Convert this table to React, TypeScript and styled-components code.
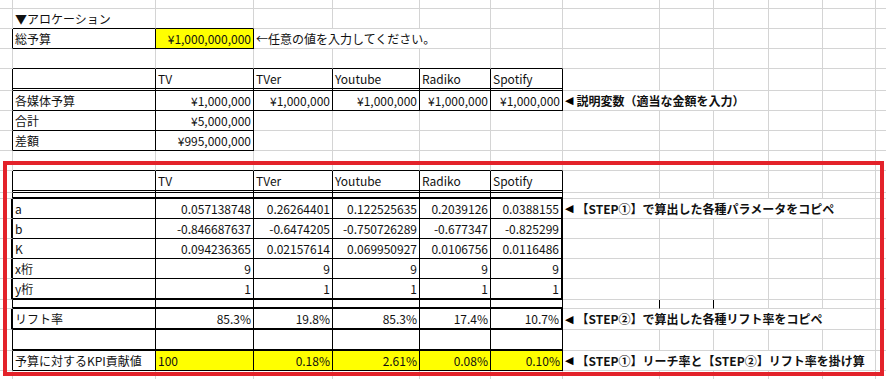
import React from "react";
import styled, { createGlobalStyle } from "styled-components";

type Edge = "n" | "g" | "k" | "K" | "d";

const COLS = [13, 143, 98, 79, 87, 71, 72, 97, 54, 55, 54, 53];
const NCOL = COLS.length + 1;
const ROWS = [9, 20, 20, 20, 22, 20, 20, 20, 20, 22, 6, 20, 20, 20, 20, 21, 9, 21, 21, 20, 9];
const NROW = ROWS.length;

const rank: Record<Edge, number> = { n: 0, g: 1, k: 2, K: 3, d: 4 };

const edgeCss = (e: Edge) =>
  e === "n"
    ? "0 none"
    : e === "g"
    ? "1px solid #d4d4d4"
    : e === "k"
    ? "1px solid #000"
    : e === "K"
    ? "2px solid #000"
    : "3px double #000";

// V[i][j]: right edge of column j in row i ; H[i][j]: bottom edge of row i in column j
const V: Edge[][] = Array.from({ length: NROW }, () =>
  Array.from({ length: NCOL }, (_, j) => (j === NCOL - 1 ? "n" : "g") as Edge)
);
const H: Edge[][] = Array.from({ length: NROW }, () =>
  Array.from({ length: NCOL }, () => "g" as Edge)
);

const setV = (i: number, j: number, e: Edge) => {
  if (i < 0 || j < 0 || i >= NROW || j >= NCOL) return;
  if (rank[e] > rank[V[i][j]]) V[i][j] = e;
};
const setH = (i: number, j: number, e: Edge) => {
  if (i < 0 || j < 0 || i >= NROW || j >= NCOL) return;
  if (rank[e] > rank[H[i][j]]) H[i][j] = e;
};

type BoxOpts = {
  top?: Edge;
  bottom?: Edge;
  left?: Edge;
  right?: Edge;
  iv?: Edge;
  ih?: Edge;
};

const box = (r0: number, r1: number, c0: number, c1: number, o: BoxOpts) => {
  for (let c = c0; c <= c1; c++) {
    if (o.top) setH(r0 - 1, c, o.top);
    if (o.bottom) setH(r1, c, o.bottom);
  }
  for (let r = r0; r <= r1; r++) {
    if (o.left) setV(r, c0 - 1, o.left);
    if (o.right) setV(r, c1, o.right);
    if (o.iv) for (let c = c0; c < c1; c++) setV(r, c, o.iv);
  }
  if (o.ih)
    for (let r = r0; r < r1; r++) for (let c = c0; c <= c1; c++) setH(r, c, o.ih);
};

const all = (e: Edge): BoxOpts => ({ top: e, bottom: e, left: e, right: e, iv: e, ih: e });

box(2, 2, 1, 2, all("k"));
box(4, 4, 1, 6, { ...all("k"), bottom: "d" });
box(5, 5, 1, 6, all("k"));
box(6, 7, 1, 2, all("k"));
box(9, 9, 1, 6, { ...all("k"), bottom: "d" });
box(10, 10, 1, 6, { left: "k", right: "k", iv: "k", bottom: "K" });
box(11, 15, 1, 6, { top: "K", bottom: "K", left: "K", right: "K", iv: "k", ih: "k" });
box(16, 16, 1, 6, { left: "k", right: "k", iv: "k", bottom: "K" });
setV(16, 7, "k");
setV(16, 8, "k");
box(17, 17, 1, 6, { top: "K", bottom: "K", left: "K", right: "K", iv: "k" });
box(18, 18, 1, 6, { left: "k", right: "k", iv: "k", bottom: "K" });
box(19, 19, 1, 6, { ...all("k"), top: "K" });

type Spec = {
  c: number;
  span?: number;
  text?: string;
  align?: "left" | "right";
  bold?: boolean;
  fill?: string;
  note?: boolean;
};

const YELLOW = "#ffff00";
const heads = ["TV", "TVer", "Youtube", "Radiko", "Spotify"];
const headRow: Spec[] = heads.map((t, k) => ({ c: 2 + k, text: t }));
const numRow = (label: string, vals: string[], fill?: string): Spec[] => [
  { c: 1, text: label },
  ...vals.map((v, k) => ({ c: 2 + k, text: v, align: "right" as const, fill })),
];

const DATA: Record<number, Spec[]> = {
  1: [{ c: 1, text: "▼アロケーション" }],
  2: [
    { c: 1, text: "総予算" },
    { c: 2, text: "¥1,000,000,000", align: "right", fill: YELLOW },
    { c: 3, span: 3, text: "←任意の値を入力してください。" },
  ],
  4: headRow,
  5: [
    ...numRow("各媒体予算", ["¥1,000,000", "¥1,000,000", "¥1,000,000", "¥1,000,000", "¥1,000,000"]),
    { c: 7, span: 3, text: "説明変数（適当な金額を入力）", bold: true, note: true },
  ],
  6: numRow("合計", ["¥5,000,000"]),
  7: numRow("差額", ["¥995,000,000"]),
  9: headRow,
  11: [
    ...numRow("a", ["0.057138748", "0.26264401", "0.122525635", "0.2039126", "0.0388155"]),
    { c: 7, span: 5, text: "【STEP①】で算出した各種パラメータをコピペ", bold: true, note: true },
  ],
  12: numRow("b", ["-0.846687637", "-0.6474205", "-0.750726289", "-0.677347", "-0.825299"]),
  13: numRow("K", ["0.094236365", "0.02157614", "0.069950927", "0.0106756", "0.0116486"]),
  14: numRow("x桁", ["9", "9", "9", "9", "9"]),
  15: numRow("y桁", ["1", "1", "1", "1", "1"]),
  17: [
    ...numRow("リフト率", ["85.3%", "19.8%", "85.3%", "17.4%", "10.7%"]),
    { c: 7, span: 5, text: "【STEP②】で算出した各種リフト率をコピペ", bold: true, note: true },
  ],
  19: [
    { c: 1, text: "予算に対するKPI貢献値" },
    { c: 2, text: "100", fill: YELLOW },
    ...["0.18%", "2.61%", "0.08%", "0.10%"].map((v, k) => ({
      c: 3 + k,
      text: v,
      align: "right" as const,
      fill: YELLOW,
    })),
    {
      c: 7,
      span: 5,
      text: "【STEP①】リーチ率と【STEP②】リフト率を掛け算",
      bold: true,
      note: true,
    },
  ],
};

const GlobalStyle = createGlobalStyle`
  html, body { margin: 0; padding: 0; background: #ffffff; }
  body { font-family: "Noto Sans CJK JP", "Noto Sans", sans-serif; }
`;

const Wrap = styled.div`
  position: relative;
  width: 886px;
  height: 379px;
  overflow: hidden;
  background: #ffffff;
`;

const Sheet = styled.div`
  display: grid;
  grid-template-columns: ${COLS.map((w) => `${w}px`).join(" ")} 1fr;
  grid-template-rows: ${ROWS.map((h) => `${h}px`).join(" ")};
  width: 886px;
  font-family: "Noto Sans CJK JP", "Noto Sans", sans-serif;
  font-size: 12px;
  color: #111;
`;

type CellProps = {
  $r: Edge;
  $b: Edge;
  $span: number;
  $fill?: string;
  $align?: "left" | "right";
  $bold?: boolean;
};

const Cell = styled.div<CellProps>`
  box-sizing: border-box;
  grid-column: span ${(p) => p.$span};
  border-right: ${(p) => edgeCss(p.$r)};
  border-bottom: ${(p) => edgeCss(p.$b)};
  background: ${(p) => p.$fill ?? "transparent"};
  display: flex;
  align-items: center;
  justify-content: ${(p) => (p.$align === "right" ? "flex-end" : "flex-start")};
  padding: 0 2px 0 2px;
  white-space: nowrap;
  overflow: visible;
  min-width: 0;
  line-height: 1;
  font-weight: ${(p) => (p.$bold ? 700 : 400)};
`;

const Marker = styled.span`
  font-family: "DejaVu Sans", sans-serif;
  font-size: 11px;
  font-weight: 400;
  margin-right: 3px;
  color: #000;
`;

const RedFrame = styled.div`
  position: absolute;
  left: 3px;
  top: 161px;
  width: 881px;
  height: 215px;
  box-sizing: border-box;
  border: 4px solid #e3222a;
  pointer-events: none;
`;

export default function App() {
  const cells: React.ReactNode[] = [];
  for (let i = 0; i < NROW; i++) {
    const specs = DATA[i] ?? [];
    let j = 0;
    while (j < NCOL) {
      const s = specs.find((x) => x.c === j);
      const span = s?.span ?? 1;
      const last = j + span - 1;
      cells.push(
        <Cell
          key={`${i}-${j}`}
          $span={span}
          $r={V[i][last]}
          $b={H[i][j]}
          $fill={s?.fill}
          $align={s?.align}
          $bold={s?.bold}
        >
          {s?.note && <Marker>◀</Marker>}
          {s?.text}
        </Cell>
      );
      j += span;
    }
  }
  return (
    <>
      <GlobalStyle />
      <Wrap>
        <Sheet>{cells}</Sheet>
        <RedFrame />
      </Wrap>
    </>
  );
}
